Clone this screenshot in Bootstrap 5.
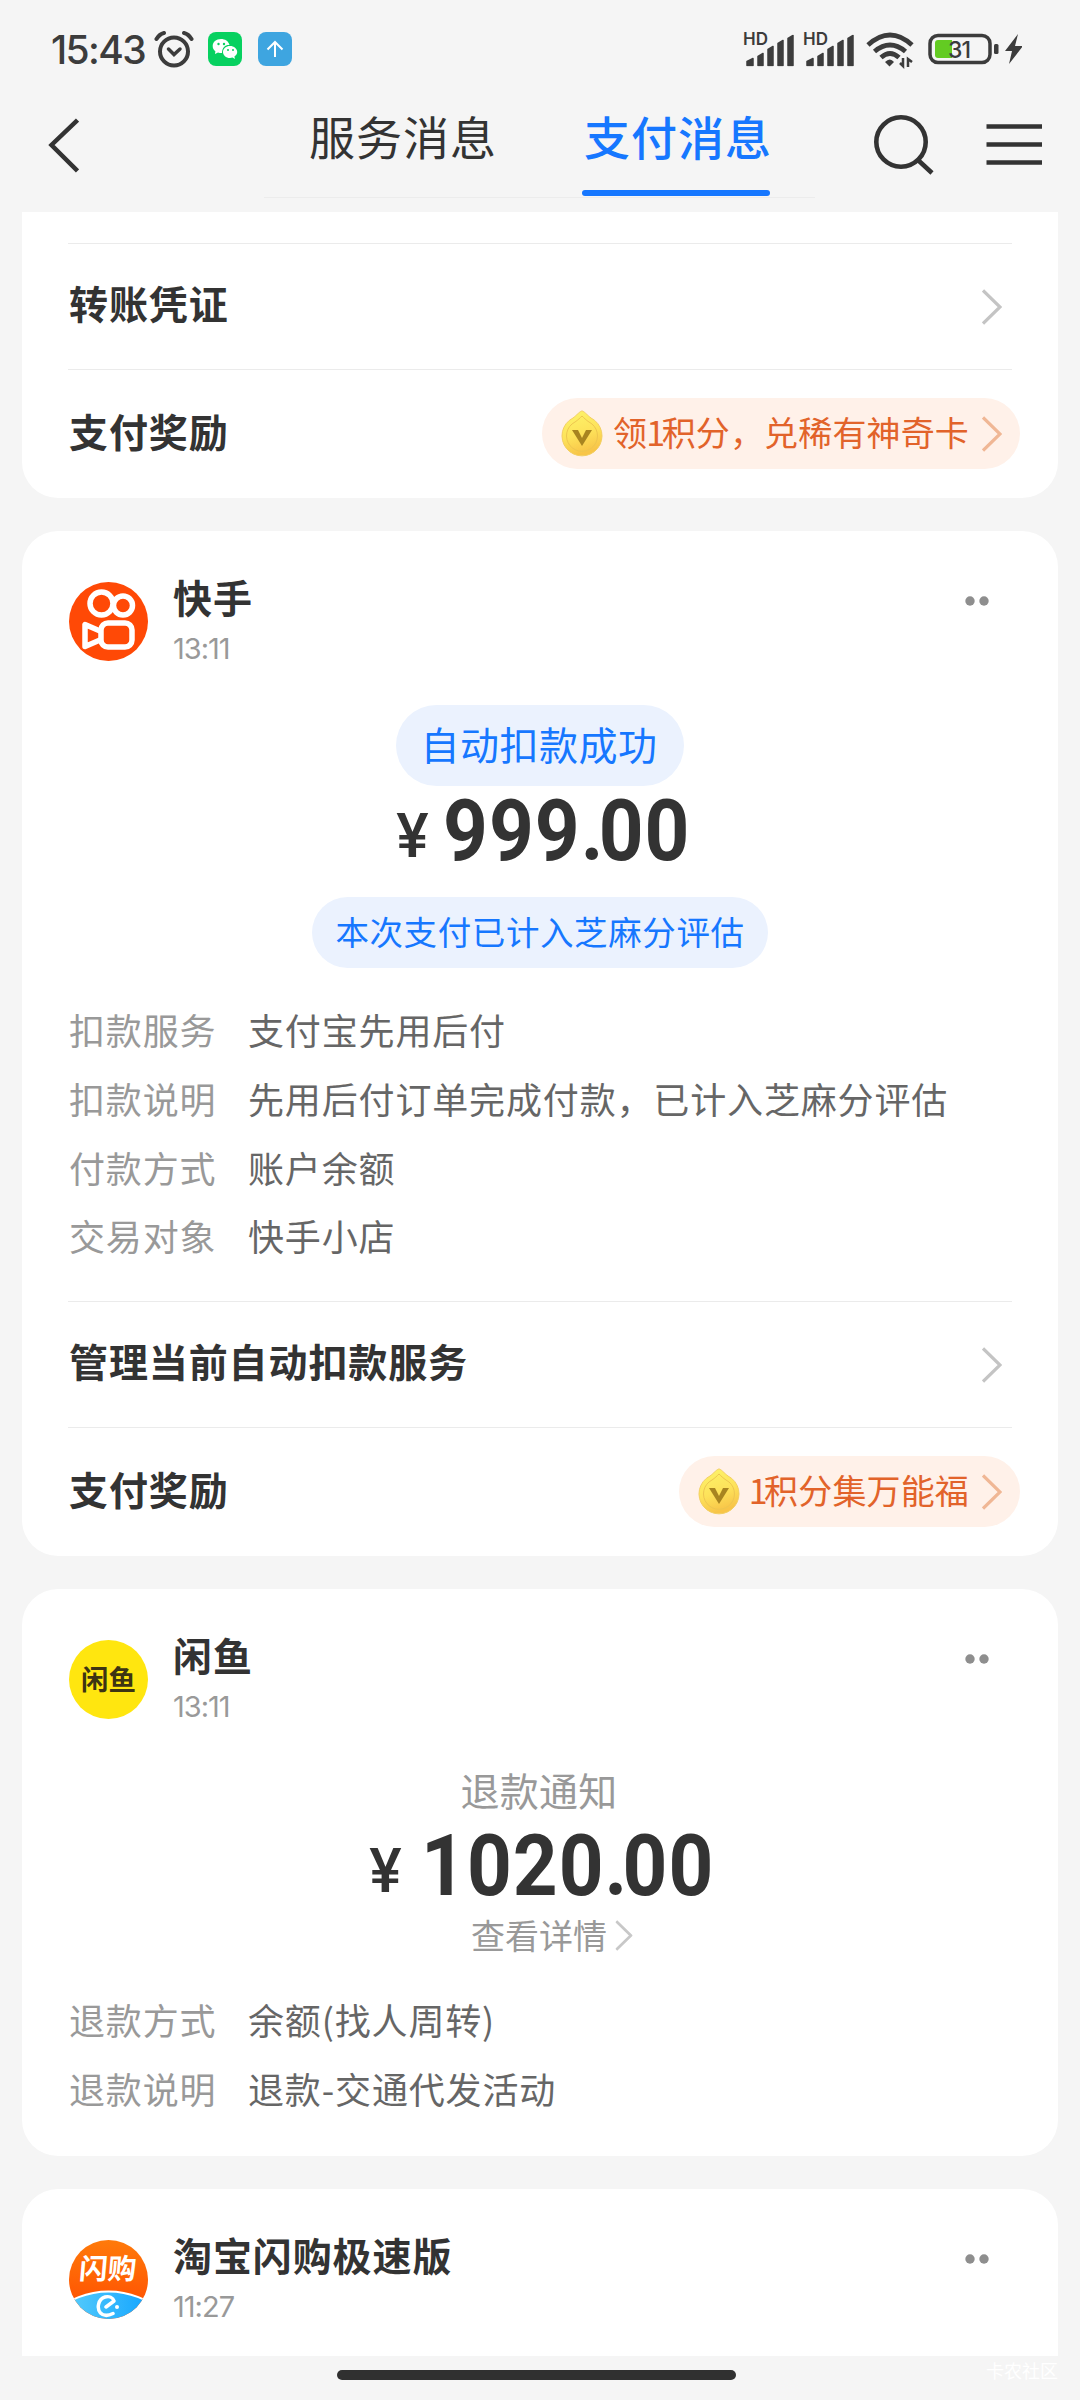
<!DOCTYPE html>
<html lang="zh-CN">
<head>
<meta charset="utf-8">
<meta name="viewport" content="width=device-width, initial-scale=1">
<title>支付消息</title>
<link href="https://cdn.jsdelivr.net/npm/bootstrap@5.3.0/dist/css/bootstrap.min.css" rel="stylesheet">
<style>
  body { background:#f5f5f5; color:#333; font-family:"Noto Sans CJK SC",sans-serif; font-size:36px; line-height:1; }
  svg { display:block; flex:none; }
  .screen { width:1080px; height:2400px; }
  .num { font-family:Inter,sans-serif; }
  .status-bar { height:100px; padding:31px 58px 0 51px; }
  .status-clock { font-size:39px; line-height:37px; letter-spacing:-1.6px; color:#3c3c3c; width:103px; font-weight:500; }
  .signal { height:42px; margin-top:-4px; }
  .title-bar { height:112px; }
  .tab-strip { width:551px; height:98px; margin-left:185px; padding:0 44px 0 44px; border-bottom:1px solid #ececec; }
  .tab-item { font-size:46px; letter-spacing:1px; line-height:50px; padding:10px 0 0 1px; width:189px; height:97px; white-space:nowrap; }
  .tab-item.current { color:#1677ff; font-weight:500; padding-left:2px; }
  .tab-item.current::after { content:""; display:block; width:188px; height:6px; border-radius:3px; background:#1677ff; margin:30px 0 0 -2px; }
  .feed { height:2144px; padding:0 22px; gap:33px; }
  .msg { background:#fff; border-radius:36px; }
  .msg-top { border-radius:0 0 36px 36px; height:286px; padding-top:31px; }
  .msg-cut { border-radius:36px 36px 0 0; height:167px; }
  .entry { height:126px; margin:0 46px; padding:0 10px 0 1px; border-top:1px solid #ebebeb; font-size:39px; letter-spacing:.9px; font-weight:700; }
  .entry-label { padding-bottom:8px; }
  .entry-last { height:129px; padding-right:0; }
  .entry-last .reward { margin-right:-8px; }
  .reward { height:71px; border-radius:36px; background:#fff1e9; color:#e2632a; font-size:34px; font-weight:400; letter-spacing:.15px; padding:0 18px 0 19px; margin-top:-1px; }
  .reward-text { padding:0 13px 3px 10px; }
  .one { letter-spacing:-3.5px; margin-left:-1px; }
  .msg-head { height:130px; padding:51px 69px 0 47px; }
  .msg-id { margin-left:25px; }
  .msg-name { font-size:39px; letter-spacing:.9px; line-height:44px; font-weight:700; margin-top:-8px; }
  .msg-time { font-size:29px; line-height:30px; letter-spacing:-1px; color:#999; margin-top:16px; }
  .state-pill { height:81px; border-radius:41px; background:#ebf2fe; color:#1677ff; font-size:39px; letter-spacing:.5px; padding:0 26px 5px 24px; margin-top:44px; }
  .score-pill { height:71px; border-radius:36px; background:#ebf2fe; color:#1677ff; font-size:33.5px; letter-spacing:.6px; padding:0 23px 3px; margin-top:30px; }
  .sum { font-family:Roboto,sans-serif; font-weight:500; font-size:85px; line-height:81px; height:81px; padding-top:5px; }
  .sum-yen { font-size:61px; margin-right:14px; position:relative; top:-3px; }
  .sum-digits { display:inline-block; font-weight:700; letter-spacing:1.1px; transform:scaleX(.92); transform-origin:0 50%; margin-right:-28px; }
  .sum-dot { letter-spacing:-5px; }
  .sum-wide .sum-yen { margin-right:19px; }
  .sum-wide .sum-digits { margin-right:-29px; }
  .refund-title { font-size:39px; letter-spacing:.2px; line-height:44px; color:#999; margin-top:48px; margin-left:-2px; }
  .see-more { font-size:34px; line-height:40px; color:#999; gap:8px; margin-top:13px; }
  .facts { padding:0 47px; }
  .fact { height:68.8px; line-height:50px; font-size:36px; letter-spacing:.85px; color:#666; }
  .fact dt { width:179px; font-weight:400; color:#999; }
  .fact dd { margin:0; }
  .home-area { height:44px; }
  .home-bar { width:399px; height:10px; border-radius:5px; background:#303030; left:337px; top:14px; }
  .stamp { right:22px; top:4px; font-size:18px; line-height:20px; color:#fff; }
</style>
</head>
<body>
<svg width="0" height="0" class="position-absolute">
  <defs>
    <linearGradient id="gold" x1="0" y1="0" x2=".3" y2="1"><stop offset="0" stop-color="#fdf56b"/><stop offset=".6" stop-color="#fde25a"/><stop offset="1" stop-color="#f8c548"/></linearGradient>
    <linearGradient id="flame" x1="0" y1="0" x2="0" y2="1"><stop offset="0" stop-color="#ff7a0a"/><stop offset="1" stop-color="#ff4a00"/></linearGradient>
    <linearGradient id="sky" x1="0" y1="0" x2="1" y2="0"><stop offset=".25" stop-color="#56ccfb"/><stop offset=".75" stop-color="#14a5ff"/></linearGradient>
    <symbol id="chev" viewBox="0 0 20 36"><path d="M1 1.500 18 18 1 34.500" fill="none" stroke="currentColor" stroke-width="3.200"/></symbol>
    <symbol id="coin" viewBox="0 0 42 48">
      <path d="M21 1c2 0 5 4 9 7a20 20 0 1 1-18 0c4-3 7-7 9-7z" fill="url(#gold)" stroke="#f3cf62" stroke-width="1"/>
      <path d="M21 6c2 2 4 4 7 6a15.500 15.500 0 1 1-14 0c3-2 5-4 7-6z" fill="none" stroke="#eec650" stroke-width="1"/>
      <path d="M11 20h6l4 8 4-8h6L21 36z" fill="#a88420"/>
    </symbol>
    <symbol id="dots" viewBox="0 0 24 10"><circle cx="5" cy="5" r="4.700" fill="#8e8e8e"/><circle cx="19" cy="5" r="4.700" fill="#8e8e8e"/></symbol>
    <symbol id="bars" viewBox="0 0 50 32"><path d="M2 27l6-3v7H2zM13 22l5-3v12h-5zM23 15l5-3v19h-5zM33 9l5-3v25h-5zM43 4l5-3v30h-5z" fill="#3c3c3c" stroke="#3c3c3c" stroke-width="1.500" stroke-linejoin="round"/></symbol>
  </defs>
</svg>

<div class="screen d-flex flex-column overflow-hidden">
  <header class="status-bar d-flex align-items-start">
    <div class="status-clock num">15:43</div>
    <svg width="40" height="38" viewBox="0 0 40 38" fill="none" stroke="#3c3c3c" stroke-linecap="round"><circle cx="20" cy="20.500" r="14" stroke-width="4"/><path d="M2.500 8q3-5 7.500-6M37.500 8q-3-5-7.500-6" stroke-width="4"/><path d="M14.500 18l5.500 5.500 6-5.500" stroke-width="3.500"/></svg>
    <svg width="34" height="36" viewBox="0 0 34 36" style="margin-left:14px"><rect y="1" width="34" height="34" rx="8" fill="#07d160"/><path d="M13 8c-5 0-8.300 3-8.300 7 0 2.400 1 4 2.700 5.300L7 23l3-1.500q1.500.5 4 .5C14 16 18 13.500 21.500 14 20.500 10 17 8 13 8z" fill="#fff"/><path d="M22 15c-4 0-7 2.700-7 6s3 6 7 6l2.500-.4 2.500 1.400-.6-2.500c1.800-1.200 2.800-2.800 2.800-4.500 0-3.300-3.200-6-7.200-6z" fill="#fff"/><g fill="#07d160"><circle cx="10.500" cy="13" r="1.200"/><circle cx="16" cy="13" r="1.200"/><circle cx="20" cy="19" r="1"/><circle cx="25" cy="19" r="1"/></g></svg>
    <svg class="ms-3" width="34" height="36" viewBox="0 0 34 36"><rect y="1" width="34" height="34" rx="8" fill="#3ea5e0"/><path d="M17 26V11M9.500 18.500 17 11l7.500 7.500" fill="none" stroke="#fff" stroke-width="2"/></svg>
    <div class="d-flex ms-auto">
      <svg class="signal" width="54" height="42" viewBox="0 -4 54 42"><text x="0" y="14" font-family="Inter" font-size="17" font-weight="600" fill="#3c3c3c">HD</text><use href="#bars" x="2" y="3.500" width="50" height="32"/></svg>
      <svg class="signal" width="54" height="42" viewBox="0 -4 54 42" style="margin-left:6px"><text x="0" y="14" font-family="Inter" font-size="17" font-weight="600" fill="#3c3c3c">HD</text><use href="#bars" x="2" y="3.500" width="50" height="32"/></svg>
      <svg width="48" height="38" viewBox="0 0 48 38" style="margin-left:9px"><g fill="none" stroke="#3c3c3c" stroke-width="4.800"><path d="M2 14Q24-6 46 14M8.500 20.500q15.500-13 31 0M15 26.500q9-8 18 0"/></g><path d="M19 31q5-5 9 0l-4.500 4.500z" fill="#3c3c3c"/><path d="M37 27v8l-3-3M42 36v-8l4 3" fill="none" stroke="#3c3c3c" stroke-width="2.500"/></svg>
      <svg width="98" height="38" viewBox="0 0 98 38" style="margin-left:10px"><rect x="6" y="4.500" width="60" height="27" rx="8" fill="none" stroke="#3c3c3c" stroke-width="3.500"/><path d="M14 9h14v18H14q-3 0-3-3V12q0-3 3-3z" fill="#63cb22"/><rect x="70" y="13" width="4.500" height="10" rx="1.500" fill="#3c3c3c"/><text x="24" y="26.500" font-family="Inter" font-size="23" font-weight="500" letter-spacing="-.8" fill="#3c3c3c">31</text><path d="M94 3 81 20h7l-3 13 14-18h-8z" fill="#3c3c3c"/></svg>
    </div>
  </header>

  <nav class="title-bar d-flex">
    <svg width="79" height="90" viewBox="0 0 79 90"><path d="M77.500 20 51.500 45 77.500 71" fill="none" stroke="#333" stroke-width="4.500"/></svg>
    <div class="tab-strip d-flex justify-content-between">
      <div class="tab-item">服务消息</div>
      <div class="tab-item current">支付消息</div>
    </div>
    <svg width="240" height="90" viewBox="815 100 240 90" fill="none" stroke="#333" stroke-width="4.600"><circle cx="901" cy="142" r="24.700"/><path d="M918.500 160.500 932 173M986.500 126.500H1042M986.500 144.500H1042M986.500 162.500H1042"/></svg>
  </nav>

  <main class="feed d-flex flex-column overflow-hidden">
    <section class="msg msg-top flex-shrink-0">
      <div class="entry d-flex align-items-center justify-content-between"><span class="entry-label">转账凭证</span><svg width="20" height="36" color="#c4c4c4"><use href="#chev"/></svg></div>
      <div class="entry entry-last d-flex align-items-center justify-content-between"><span class="entry-label">支付奖励</span>
        <span class="reward d-flex align-items-center"><svg width="42" height="48"><use href="#coin"/></svg><span class="reward-text">领<span class="one">1</span>积分，兑稀有神奇卡</span><svg width="20" height="36" color="#f0b795"><use href="#chev"/></svg></span></div>
    </section>

    <section class="msg flex-shrink-0" style="height:1025px">
      <div class="msg-head d-flex">
        <svg width="79" height="79" viewBox="0 0 79 79"><circle cx="39.500" cy="39.500" r="39.500" fill="#ff4906"/><g fill="none" stroke="#fff" stroke-width="5.500"><circle cx="32.500" cy="21.500" r="11.500"/><circle cx="54" cy="23.500" r="9.500"/><rect x="32" y="41" width="31" height="24" rx="7"/><path d="M31 49 16 42.500v22L31 58" stroke-linejoin="round"/></g></svg>
        <div class="msg-id flex-grow-1"><div class="msg-name">快手</div><div class="msg-time num">13:11</div></div>
        <svg width="24" height="10" style="margin-top:14px"><use href="#dots"/></svg>
      </div>
      <div class="d-flex flex-column align-items-center">
        <div class="state-pill d-flex align-items-center">自动扣款成功</div>
        <div class="sum"><span class="sum-yen">¥</span><span class="sum-digits">999<span class="sum-dot">.</span>00</span></div>
        <div class="score-pill d-flex align-items-center">本次支付已计入芝麻分评估</div>
      </div>
      <dl class="facts mb-0" style="margin-top:36px;height:297px">
        <div class="fact d-flex"><dt>扣款服务</dt><dd>支付宝先用后付</dd></div>
        <div class="fact d-flex"><dt>扣款说明</dt><dd>先用后付订单完成付款，已计入芝麻分评估</dd></div>
        <div class="fact d-flex"><dt>付款方式</dt><dd>账户余额</dd></div>
        <div class="fact d-flex"><dt>交易对象</dt><dd>快手小店</dd></div>
      </dl>
      <div class="entry d-flex align-items-center justify-content-between"><span class="entry-label">管理当前自动扣款服务</span><svg width="20" height="36" color="#c4c4c4"><use href="#chev"/></svg></div>
      <div class="entry entry-last d-flex align-items-center justify-content-between"><span class="entry-label">支付奖励</span>
        <span class="reward d-flex align-items-center"><svg width="42" height="48"><use href="#coin"/></svg><span class="reward-text"><span class="one">1</span>积分集万能福</span><svg width="20" height="36" color="#f0b795"><use href="#chev"/></svg></span></div>
    </section>

    <section class="msg flex-shrink-0" style="height:567px">
      <div class="msg-head d-flex">
        <svg width="79" height="79" viewBox="0 0 79 79"><circle cx="39.500" cy="39.500" r="39.500" fill="#ffe60f"/><text x="12" y="49.500" font-family="Noto Sans CJK SC" font-weight="700" font-size="27.500" fill="#3d3413">闲鱼</text></svg>
        <div class="msg-id flex-grow-1"><div class="msg-name">闲鱼</div><div class="msg-time num">13:11</div></div>
        <svg width="24" height="10" style="margin-top:14px"><use href="#dots"/></svg>
      </div>
      <div class="d-flex flex-column align-items-center">
        <div class="refund-title">退款通知</div>
        <div class="sum sum-wide" style="margin-top:10px"><span class="sum-yen">¥</span><span class="sum-digits">1020<span class="sum-dot">.</span>00</span></div>
        <div class="see-more d-flex align-items-center ps-4">查看详情<svg width="18" height="31" color="#c8c8c8" viewBox="0 0 20 36"><use href="#chev"/></svg></div>
      </div>
      <dl class="facts mb-0" style="margin-top:39px">
        <div class="fact d-flex"><dt>退款方式</dt><dd>余额(找人周转)</dd></div>
        <div class="fact d-flex"><dt>退款说明</dt><dd>退款-交通代发活动</dd></div>
      </dl>
    </section>

    <section class="msg msg-cut flex-shrink-0">
      <div class="msg-head d-flex">
        <svg width="79" height="79" viewBox="0 0 79 79"><defs><clipPath id="disc"><circle cx="39.500" cy="39.500" r="39.500"/></clipPath></defs><g clip-path="url(#disc)"><rect width="79" height="79" fill="url(#flame)"/><circle cx="39.500" cy="132.500" r="81" fill="url(#sky)" stroke="#fff" stroke-width="2"/></g><text x="10" y="39.500" font-family="Noto Sans CJK SC" font-weight="700" font-size="28.500" fill="#fff" transform="skewX(-5) translate(3 0)">闪购</text><path d="M44 73.500q-8 4-12.500-.5c-4-4.500-2.500-14 4.500-16 4-1 8 .5 9 4l-8 6" fill="none" stroke="#fff" stroke-width="3.500" stroke-linecap="round" stroke-linejoin="round"/><circle cx="48" cy="67" r="2" fill="#fff"/></svg>
        <div class="msg-id flex-grow-1"><div class="msg-name">淘宝闪购极速版</div><div class="msg-time num">11:27</div></div>
        <svg width="24" height="10" style="margin-top:14px"><use href="#dots"/></svg>
      </div>
    </section>
  </main>

  <footer class="home-area position-relative">
    <div class="home-bar position-absolute"></div>
    <div class="stamp position-absolute">卡农社区</div>
  </footer>
</div>
<script src="https://cdn.jsdelivr.net/npm/bootstrap@5.3.0/dist/js/bootstrap.bundle.min.js"></script>
</body>
</html>
